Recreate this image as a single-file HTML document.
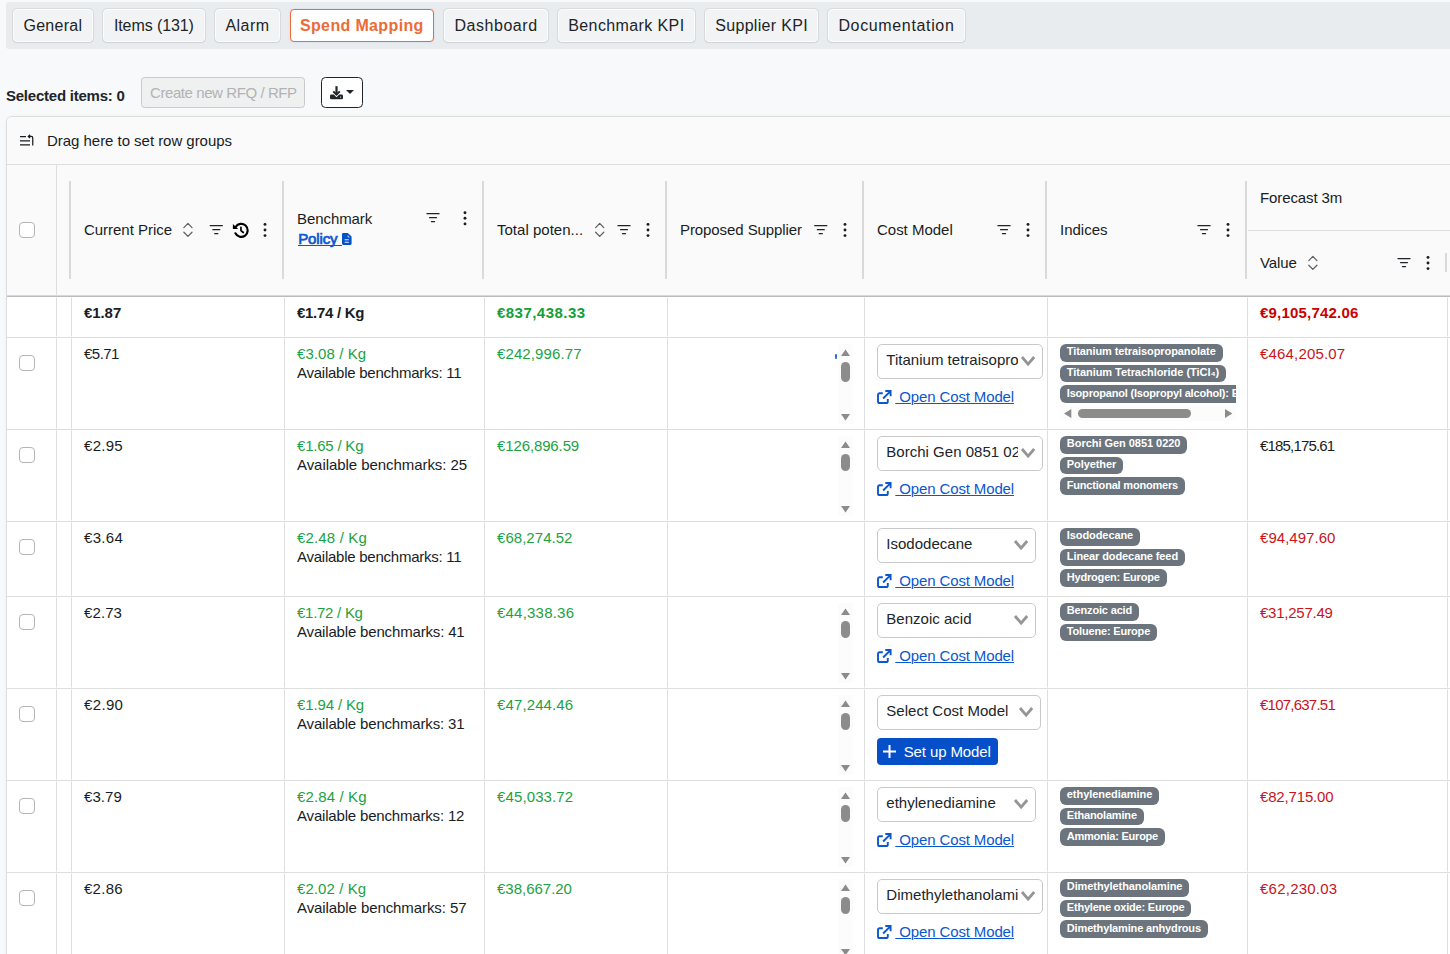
<!DOCTYPE html>
<html lang="en"><head><meta charset="utf-8"><title>Spend Mapping</title>
<style>
*{box-sizing:border-box}
html,body{margin:0;padding:0}
body{width:1450px;height:954px;overflow:hidden;background:#f8f9fa;font-family:"Liberation Sans",sans-serif;color:#181d1f;position:relative;font-size:15px}
.abs,.t{position:absolute}
.t{white-space:nowrap;line-height:20px}
.tabbar{position:absolute;left:6px;top:2px;width:1450px;height:46.5px;background:#e9ecef;border-radius:3px 0 0 3px}
.tab{position:absolute;height:33px;border:1.2px solid #fbfcfd;border-radius:4px;background:#f2f3f5;color:#212529;font-size:16px;line-height:32.400px;text-align:center;white-space:nowrap;box-shadow:0 0 0 1px rgba(33,37,41,.075),0 1px 2px rgba(33,37,41,.06)}
.tab.act{background:#fff;border-color:#ee6a37;color:#ee6a37;font-weight:700;box-shadow:0 0 2px rgba(120,170,220,.35)}
.grid{position:absolute;left:6px;top:116px;width:1460px;height:860px;border:1px solid #dcdddd;border-radius:6px 0 0 0;background:#fff;overflow:hidden;box-shadow:0 0 4px rgba(0,0,0,.035)}
.hbg{position:absolute;left:0;top:0;width:1460px;height:179px;background:#fafafa}
.hl{position:absolute;background:#dddede}
.vh{position:absolute;width:2px;background:#d9dadb}
.row{position:absolute;left:0;width:1460px;border-bottom:1px solid #dddede;background:#fff}
.cell{position:absolute;top:0;height:100%;border:1px solid transparent;border-right-color:#dddede}
.cb{position:absolute;width:16px;height:16px;border:1px solid #b3b5b7;border-radius:4px;background:#fff}
svg{position:absolute;overflow:visible}
.sel{position:absolute;height:35px;border:1px solid #c9c9c9;border-radius:5px;background:#fff;overflow:hidden}
.sel .t{left:8.300px;top:5px;color:#212529}
.badge{position:absolute;height:17.85px;border-radius:6px;background:#6c757d;color:#fff;font-weight:700;font-size:11px;line-height:14.200px;padding:0 6.800px;white-space:nowrap;overflow:hidden}
.lnk{color:#0b57d0;text-decoration:underline;text-underline-offset:0.600px;text-decoration-thickness:1.100px}
.vs{position:absolute;width:14.500px;background:#fcfcfc}
.vs i{position:absolute;left:3px;width:9px;border-radius:4.5px;background:#8c8c8c}
.btn{position:absolute;border-radius:4px}
</style></head><body>

<div class="tabbar">
<div class="tab" style="left:6.80px;width:80.20px;top:7.1px;height:32.95px;letter-spacing:0.281px">General</div>
<div class="tab" style="left:97.00px;width:101.73px;top:7.1px;height:32.95px;letter-spacing:-0.095px">Items (131)</div>
<div class="tab" style="left:208.73px;width:65.45px;top:7.1px;height:32.95px;letter-spacing:0.43px">Alarm</div>
<div class="tab act" style="left:283.95px;width:143.80px;top:6.9px;height:33.2px;letter-spacing:0.355px">Spend Mapping</div>
<div class="tab" style="left:438.14px;width:103.79px;top:7.1px;height:32.95px;letter-spacing:0.544px">Dashboard</div>
<div class="tab" style="left:551.93px;width:136.93px;top:7.1px;height:32.95px;letter-spacing:0.389px">Benchmark KPI</div>
<div class="tab" style="left:698.86px;width:113.45px;top:7.1px;height:32.95px;letter-spacing:0.309px">Supplier KPI</div>
<div class="tab" style="left:822.31px;width:136.26px;top:7.1px;height:32.95px;letter-spacing:0.652px">Documentation</div>
</div>
<div class="t " style="left:6px;top:86.10px;font-size:15px;letter-spacing:-0.237px;font-weight:700;color:#212529;">Selected items: 0</div>
<div class="btn" style="left:141px;top:77px;width:164px;height:30.800px;background:#eff0f0;border:1px solid #c9cacb;border-radius:3.500px"></div>
<div class="t " style="left:150px;top:82.80px;font-size:15px;letter-spacing:-0.419px;color:#b1b3b5;">Create new RFQ / RFP</div>
<div class="btn" style="left:321px;top:76.800px;width:42.100px;height:31px;background:#fff;border:1.25px solid #212529;border-radius:4.500px"></div>
<svg style="left:330.100px;top:85.700px" width="13" height="13.300" viewBox="0 0 13 13.300"><path d="M6.500 0.200v8" fill="none" stroke="#212529" stroke-width="2.200"/><path d="M3.200 5.400 6.500 8.700l3.300-3.300" fill="none" stroke="#212529" stroke-width="2"/><path d="M1.300 8.600h2.500l2.700 2.700 2.700-2.700h2.500a1.300 1.300 0 0 1 1.300 1.300v2.100a1.300 1.300 0 0 1-1.300 1.300H1.300A1.300 1.300 0 0 1 0 12V9.900a1.300 1.300 0 0 1 1.300-1.300z" fill="#212529"/><circle cx="10.600" cy="11.100" r="0.600" fill="#cfe"/></svg>
<svg style="left:345.900px;top:89.900px" width="8" height="4" viewBox="0 0 8 4"><path d="M0 0h8L4 4z" fill="#212529"/></svg>
<div class="grid">
<div class="hbg"></div>
<div class="hl" style="left:0;top:47px;width:1460px;height:1px"></div>
<svg style="left:13px;top:18px" width="14" height="11" viewBox="0 0 14 11"><path d="M0 1.700h6M0 5.800h10M0 9.800h10M12.750 10.400V2.900a1.500 1.500 0 0 0-1.500-1.500H8.600M10.100-0.300 8.300 1.400l1.800 1.700" fill="none" stroke="#181d1f" stroke-width="1.250"/></svg>
<div class="t " style="left:40px;top:13.80px;font-size:15px;letter-spacing:-0.034px;">Drag here to set row groups</div>
<div class="hl" style="left:49px;top:48px;width:1px;height:130px"></div>
<div class="hl" style="left:0;top:178px;width:1460px;height:1px;background:#d8d9da"></div>
<div class="hl" style="left:0;top:179px;width:1460px;height:1px;background:#bbbcbe"></div>
<div class="vh" style="left:62px;top:64px;height:98px"></div>
<div class="vh" style="left:275px;top:64px;height:98px"></div>
<div class="vh" style="left:475px;top:64px;height:98px"></div>
<div class="vh" style="left:658px;top:64px;height:98px"></div>
<div class="vh" style="left:855px;top:64px;height:98px"></div>
<div class="vh" style="left:1038px;top:64px;height:98px"></div>
<div class="vh" style="left:1238px;top:64px;height:98px"></div>
<div class="vh" style="left:1438px;top:136px;height:19px"></div>
<div class="hl" style="left:1241px;top:113px;width:300px;height:1px"></div>
<div class="cb" style="left:12px;top:105px"></div>
<div class="t " style="left:77px;top:103.00px;font-size:15px;letter-spacing:-0.03px;">Current Price</div>
<svg style="left:175px;top:104px" width="11" height="17" viewBox="0 0 11 17"><g transform="translate(0.95 0.9)"><path d="M0.950 5.700 5 1.500l4.050 4.200M0.950 10.300 5 14.500l4.050-4.200" fill="none" stroke="#606365" stroke-width="1.300" stroke-linecap="round" stroke-linejoin="round"/></g></svg>
<svg style="left:202px;top:107px" width="15" height="11" viewBox="0 0 15 11"><g transform="translate(0.3 0.65)"><path d="M0.950 1h12.100M3.550 5h6.900M5.450 9h3.100" fill="none" stroke="#1f2426" stroke-width="1.250" stroke-linecap="round"/></g></svg>
<svg style="left:223.00px;top:103.00px" width="20" height="20" viewBox="0 0 20 20"><path d="M5.700 6.900A6.500 6.500 0 1 1 5.400 13.300" fill="none" stroke="#000" stroke-width="2.150" stroke-linecap="round"/><path d="M2.900 3.900V9.100H8.200z" fill="#000"/><path d="M10.950 7.300V10.500L13.300 12.500" fill="none" stroke="#000" stroke-width="1.700" stroke-linecap="round" stroke-linejoin="round"/></svg>
<svg style="left:256px;top:105px" width="5" height="17" viewBox="0 0 5 17"><g transform="translate(0 0)"><circle cx="2" cy="2.400" r="1.450" fill="#181d1f"/><circle cx="2" cy="8" r="1.450" fill="#181d1f"/><circle cx="2" cy="13.600" r="1.450" fill="#181d1f"/></g></svg>
<div class="t " style="left:290px;top:92.00px;font-size:15px;letter-spacing:-0.078px;">Benchmark</div>
<div class="t " style="left:291.2px;top:111.70px;font-size:15px;letter-spacing:-0.119px;color:#0b57d0;-webkit-text-stroke:0.700px #0b57d0;">Policy</div>
<div class="hl" style="left:291.2px;top:127.7px;width:44.200px;height:1.300px;background:#0b57d0"></div>
<svg style="left:334.9px;top:116.2px" width="9.600" height="11.900" viewBox="0 0 9.600 11.900"><path d="M1.300 0h4.400L9.600 3.500v7.100a1.300 1.300 0 0 1-1.300 1.300H1.300A1.300 1.300 0 0 1 0 10.600V1.300A1.300 1.300 0 0 1 1.300 0z" fill="#0552c8"/><path d="M5.900 2.700 6.100 3.900 7.400 4.100" fill="none" stroke="#e8effa" stroke-width="0.900"/><path d="M2.700 6.800h4.100M2.600 9.300h4.300" stroke="#e3ecf9" stroke-width="1.050"/></svg>
<svg style="left:419px;top:95px" width="15" height="11" viewBox="0 0 15 11"><g transform="translate(0 0.65)"><path d="M0.950 1h12.100M3.550 5h6.900M5.450 9h3.100" fill="none" stroke="#1f2426" stroke-width="1.250" stroke-linecap="round"/></g></svg>
<svg style="left:456px;top:93px" width="5" height="17" viewBox="0 0 5 17"><g transform="translate(0 0.3)"><circle cx="2" cy="2.400" r="1.450" fill="#181d1f"/><circle cx="2" cy="8" r="1.450" fill="#181d1f"/><circle cx="2" cy="13.600" r="1.450" fill="#181d1f"/></g></svg>
<div class="t " style="left:490px;top:103.00px;font-size:15px;letter-spacing:0.016px;">Total poten...</div>
<svg style="left:587px;top:104px" width="11" height="17" viewBox="0 0 11 17"><g transform="translate(0.7 0.9)"><path d="M0.950 5.700 5 1.500l4.050 4.200M0.950 10.300 5 14.500l4.050-4.200" fill="none" stroke="#606365" stroke-width="1.300" stroke-linecap="round" stroke-linejoin="round"/></g></svg>
<svg style="left:610px;top:107px" width="15" height="11" viewBox="0 0 15 11"><g transform="translate(0 0.65)"><path d="M0.950 1h12.100M3.550 5h6.900M5.450 9h3.100" fill="none" stroke="#1f2426" stroke-width="1.250" stroke-linecap="round"/></g></svg>
<svg style="left:639px;top:105px" width="5" height="17" viewBox="0 0 5 17"><g transform="translate(0 0)"><circle cx="2" cy="2.400" r="1.450" fill="#181d1f"/><circle cx="2" cy="8" r="1.450" fill="#181d1f"/><circle cx="2" cy="13.600" r="1.450" fill="#181d1f"/></g></svg>
<div class="t " style="left:673px;top:103.00px;font-size:15px;letter-spacing:-0.082px;">Proposed Supplier</div>
<svg style="left:806px;top:107px" width="15" height="11" viewBox="0 0 15 11"><g transform="translate(0.8 0.65)"><path d="M0.950 1h12.100M3.550 5h6.900M5.450 9h3.100" fill="none" stroke="#1f2426" stroke-width="1.250" stroke-linecap="round"/></g></svg>
<svg style="left:836px;top:105px" width="5" height="17" viewBox="0 0 5 17"><g transform="translate(0 0)"><circle cx="2" cy="2.400" r="1.450" fill="#181d1f"/><circle cx="2" cy="8" r="1.450" fill="#181d1f"/><circle cx="2" cy="13.600" r="1.450" fill="#181d1f"/></g></svg>
<div class="t " style="left:870px;top:103.00px;font-size:15px;letter-spacing:-0.017px;">Cost Model</div>
<svg style="left:990px;top:107px" width="15" height="11" viewBox="0 0 15 11"><g transform="translate(0 0.65)"><path d="M0.950 1h12.100M3.550 5h6.900M5.450 9h3.100" fill="none" stroke="#1f2426" stroke-width="1.250" stroke-linecap="round"/></g></svg>
<svg style="left:1019px;top:105px" width="5" height="17" viewBox="0 0 5 17"><g transform="translate(0 0)"><circle cx="2" cy="2.400" r="1.450" fill="#181d1f"/><circle cx="2" cy="8" r="1.450" fill="#181d1f"/><circle cx="2" cy="13.600" r="1.450" fill="#181d1f"/></g></svg>
<div class="t " style="left:1053px;top:103.00px;font-size:15px;letter-spacing:0.002px;">Indices</div>
<svg style="left:1190px;top:107px" width="15" height="11" viewBox="0 0 15 11"><g transform="translate(0 0.65)"><path d="M0.950 1h12.100M3.550 5h6.900M5.450 9h3.100" fill="none" stroke="#1f2426" stroke-width="1.250" stroke-linecap="round"/></g></svg>
<svg style="left:1219px;top:105px" width="5" height="17" viewBox="0 0 5 17"><g transform="translate(0 0)"><circle cx="2" cy="2.400" r="1.450" fill="#181d1f"/><circle cx="2" cy="8" r="1.450" fill="#181d1f"/><circle cx="2" cy="13.600" r="1.450" fill="#181d1f"/></g></svg>
<div class="t " style="left:1253px;top:71.00px;font-size:15px;letter-spacing:-0.112px;">Forecast 3m</div>
<div class="t " style="left:1253px;top:136.00px;font-size:15px;letter-spacing:-0.125px;">Value</div>
<svg style="left:1300px;top:137px" width="11" height="17" viewBox="0 0 11 17"><g transform="translate(0.85 0.9)"><path d="M0.950 5.700 5 1.500l4.050 4.200M0.950 10.300 5 14.500l4.050-4.200" fill="none" stroke="#606365" stroke-width="1.300" stroke-linecap="round" stroke-linejoin="round"/></g></svg>
<svg style="left:1390px;top:140px" width="15" height="11" viewBox="0 0 15 11"><g transform="translate(0 0.62)"><path d="M0.950 1h12.100M3.550 5h6.900M5.450 9h3.100" fill="none" stroke="#1f2426" stroke-width="1.250" stroke-linecap="round"/></g></svg>
<svg style="left:1419px;top:138px" width="5" height="17" viewBox="0 0 5 17"><g transform="translate(0 0)"><circle cx="2" cy="2.400" r="1.450" fill="#181d1f"/><circle cx="2" cy="8" r="1.450" fill="#181d1f"/><circle cx="2" cy="13.600" r="1.450" fill="#181d1f"/></g></svg>
<div class="row" style="top:180px;height:41px"><div class="cell" style="left:0px;width:50px"></div><div class="cell" style="left:50px;width:15px"></div><div class="cell" style="left:65px;width:213px"></div><div class="cell" style="left:278px;width:200px"></div><div class="cell" style="left:478px;width:183px"></div><div class="cell" style="left:661px;width:197px"></div><div class="cell" style="left:858px;width:183px"></div><div class="cell" style="left:1041px;width:200px"></div><div class="cell" style="left:1241px;width:200px"></div>
<div class="t " style="left:77px;top:5.80px;font-size:15px;letter-spacing:-0.078px;font-weight:700;">€1.87</div>
<div class="t " style="left:290px;top:5.80px;font-size:15px;letter-spacing:-0.287px;font-weight:700;">€1.74 / Kg</div>
<div class="t " style="left:490px;top:5.80px;font-size:15px;letter-spacing:0.467px;font-weight:700;color:#12a136;">€837,438.33</div>
<div class="t " style="left:1253px;top:5.80px;font-size:15px;letter-spacing:0.198px;font-weight:700;color:#cc0000;">€9,105,742.06</div>
</div>
<div class="row" style="top:221px;height:92px"><div class="cell" style="left:0px;width:50px"></div><div class="cell" style="left:50px;width:15px"></div><div class="cell" style="left:65px;width:213px"></div><div class="cell" style="left:278px;width:200px"></div><div class="cell" style="left:478px;width:183px"></div><div class="cell" style="left:661px;width:197px"></div><div class="cell" style="left:858px;width:183px"></div><div class="cell" style="left:1041px;width:200px"></div><div class="cell" style="left:1241px;width:200px"></div>
<div class="cb" style="left:12px;top:17px"></div>
<div class="t " style="left:77px;top:5.80px;font-size:15px;letter-spacing:-0.525px;">€5.71</div>
<div class="t " style="left:290px;top:5.80px;font-size:15px;letter-spacing:0.081px;color:#1ba242;">€3.08 / Kg</div>
<div class="t " style="left:290px;top:24.80px;font-size:15px;letter-spacing:-0.249px;">Available benchmarks: 11</div>
<div class="t " style="left:490px;top:5.80px;font-size:15px;letter-spacing:0.116px;color:#1ba242;">€242,996.77</div>
<div class="vs" style="left:831.3px;top:6px;height:79.600px"><svg style="left:3px;top:5px" width="9" height="7" viewBox="0 0 9 7"><path d="M0 7 4.5 0.600 9 7z" fill="#8c8c8c"/></svg><i style="top:18px;height:19.8px"></i><svg style="left:3px;top:69.800px" width="9" height="7" viewBox="0 0 9 7"><path d="M0 0 4.5 6.4 9 0z" fill="#8c8c8c"/></svg></div>
<div class="abs" style="left:828px;top:16px;width:2px;height:5px;background:#2a6bd6;border-radius:1px"></div>
<div class="sel" style="left:870px;top:6px;width:166px">
<div class="t" style="width:131.9px;overflow:hidden;letter-spacing:0.020px">Titanium tetraisopropanolate</div>
<svg style="left:142.8px;top:10.8px" width="14.200" height="10.100" viewBox="0 0 14.200 10.100"><path d="M1 1 7.100 8.100 13.200 1" fill="none" stroke="#959595" stroke-width="2.800"/></svg>
</div>
<svg style="left:870px;top:52.600px" width="15" height="13" viewBox="0 0 15 13"><path d="M5.8 2.300H2.600A1.600 1.600 0 0 0 1 3.900v6.500A1.600 1.600 0 0 0 2.600 12h6.600a1.600 1.600 0 0 0 1.600-1.600V8" fill="none" stroke="#0b57d0" stroke-width="1.9"/><path d="M8.300 0h5.300v5.300M13.300 0.300 6.100 7.500" fill="none" stroke="#0b57d0" stroke-width="1.900"/></svg>
<div class="t lnk" style="left:888.3px;top:49.10px;font-size:15px;letter-spacing:-0.138px;color:#0b57d0;white-space:pre;"> Open Cost Model</div>
<div class="badge" style="left:1053px;top:6.0px;width:162.5px;letter-spacing:-0.089px;">Titanium tetraisopropanolate</div>
<div class="badge" style="left:1053px;top:26.6px;width:166.1px;letter-spacing:-0.045px;">Titanium Tetrachloride (TiCl₄)</div>
<div class="badge" style="left:1053px;top:47.2px;width:176.0px;letter-spacing:-0.189px;border-radius:6px 0 0 6px;padding-top:1px;">Isopropanol (Isopropyl alcohol): Europe</div>
<div class="abs" style="left:1053px;top:68px;width:176px;height:15px;background:#fcfcfc">
<svg style="left:4.400px;top:3px" width="7.300" height="9" viewBox="0 0 7.300 9"><path d="M7.300 0 0 4.500 7.300 9z" fill="#8c8c8c"/></svg>
<div class="abs" style="left:18px;top:3px;width:113px;height:9px;border-radius:4.500px;background:#8c8c8c"></div>
<svg style="left:164.500px;top:3px" width="7.300" height="9" viewBox="0 0 7.300 9"><path d="M0 0 7.300 4.500 0 9z" fill="#8c8c8c"/></svg>
</div>
<div class="t " style="left:1253px;top:5.80px;font-size:15px;letter-spacing:0.173px;color:#c9141a;">€464,205.07</div>
</div>
<div class="row" style="top:313px;height:92px"><div class="cell" style="left:0px;width:50px"></div><div class="cell" style="left:50px;width:15px"></div><div class="cell" style="left:65px;width:213px"></div><div class="cell" style="left:278px;width:200px"></div><div class="cell" style="left:478px;width:183px"></div><div class="cell" style="left:661px;width:197px"></div><div class="cell" style="left:858px;width:183px"></div><div class="cell" style="left:1041px;width:200px"></div><div class="cell" style="left:1241px;width:200px"></div>
<div class="cb" style="left:12px;top:17px"></div>
<div class="t " style="left:77px;top:5.80px;font-size:15px;letter-spacing:0.291px;">€2.95</div>
<div class="t " style="left:290px;top:5.80px;font-size:15px;letter-spacing:-0.212px;color:#1ba242;">€1.65 / Kg</div>
<div class="t " style="left:290px;top:24.80px;font-size:15px;letter-spacing:-0.059px;">Available benchmarks: 25</div>
<div class="t " style="left:490px;top:5.80px;font-size:15px;letter-spacing:-0.122px;color:#1ba242;">€126,896.59</div>
<div class="vs" style="left:831.3px;top:6px;height:79.600px"><svg style="left:3px;top:5px" width="9" height="7" viewBox="0 0 9 7"><path d="M0 7 4.5 0.600 9 7z" fill="#8c8c8c"/></svg><i style="top:18px;height:17.4px"></i><svg style="left:3px;top:69.800px" width="9" height="7" viewBox="0 0 9 7"><path d="M0 0 4.5 6.4 9 0z" fill="#8c8c8c"/></svg></div>
<div class="sel" style="left:870px;top:6px;width:166px">
<div class="t" style="width:131.9px;overflow:hidden;letter-spacing:0.020px">Borchi Gen 0851 0220</div>
<svg style="left:142.8px;top:10.8px" width="14.200" height="10.100" viewBox="0 0 14.200 10.100"><path d="M1 1 7.100 8.100 13.200 1" fill="none" stroke="#959595" stroke-width="2.800"/></svg>
</div>
<svg style="left:870px;top:52.600px" width="15" height="13" viewBox="0 0 15 13"><path d="M5.8 2.300H2.600A1.600 1.600 0 0 0 1 3.900v6.500A1.600 1.600 0 0 0 2.600 12h6.600a1.600 1.600 0 0 0 1.600-1.600V8" fill="none" stroke="#0b57d0" stroke-width="1.9"/><path d="M8.300 0h5.300v5.300M13.300 0.300 6.100 7.500" fill="none" stroke="#0b57d0" stroke-width="1.900"/></svg>
<div class="t lnk" style="left:888.3px;top:49.10px;font-size:15px;letter-spacing:-0.138px;color:#0b57d0;white-space:pre;"> Open Cost Model</div>
<div class="badge" style="left:1053px;top:6.0px;width:127.3px;letter-spacing:-0.035px;">Borchi Gen 0851 0220</div>
<div class="badge" style="left:1053px;top:26.6px;width:63.1px;letter-spacing:-0.078px;">Polyether</div>
<div class="badge" style="left:1053px;top:47.2px;width:124.8px;letter-spacing:-0.197px;padding-top:1px;">Functional monomers</div>
<div class="t " style="left:1253px;top:5.80px;font-size:15px;letter-spacing:-0.827px;color:#181d1f;">€185,175.61</div>
</div>
<div class="row" style="top:405px;height:75px"><div class="cell" style="left:0px;width:50px"></div><div class="cell" style="left:50px;width:15px"></div><div class="cell" style="left:65px;width:213px"></div><div class="cell" style="left:278px;width:200px"></div><div class="cell" style="left:478px;width:183px"></div><div class="cell" style="left:661px;width:197px"></div><div class="cell" style="left:858px;width:183px"></div><div class="cell" style="left:1041px;width:200px"></div><div class="cell" style="left:1241px;width:200px"></div>
<div class="cb" style="left:12px;top:17px"></div>
<div class="t " style="left:77px;top:5.80px;font-size:15px;letter-spacing:0.306px;">€3.64</div>
<div class="t " style="left:290px;top:5.80px;font-size:15px;letter-spacing:0.158px;color:#1ba242;">€2.48 / Kg</div>
<div class="t " style="left:290px;top:24.80px;font-size:15px;letter-spacing:-0.249px;">Available benchmarks: 11</div>
<div class="t " style="left:490px;top:5.80px;font-size:15px;letter-spacing:0.042px;color:#1ba242;">€68,274.52</div>
<div class="sel" style="left:870px;top:6px;width:159px">
<div class="t" style="width:124.9px;overflow:hidden;letter-spacing:0.020px">Isododecane</div>
<svg style="left:135.8px;top:10.8px" width="14.200" height="10.100" viewBox="0 0 14.200 10.100"><path d="M1 1 7.100 8.100 13.200 1" fill="none" stroke="#959595" stroke-width="2.800"/></svg>
</div>
<svg style="left:870px;top:52.600px" width="15" height="13" viewBox="0 0 15 13"><path d="M5.8 2.300H2.600A1.600 1.600 0 0 0 1 3.900v6.500A1.600 1.600 0 0 0 2.600 12h6.600a1.600 1.600 0 0 0 1.600-1.600V8" fill="none" stroke="#0b57d0" stroke-width="1.9"/><path d="M8.300 0h5.300v5.300M13.300 0.300 6.100 7.500" fill="none" stroke="#0b57d0" stroke-width="1.900"/></svg>
<div class="t lnk" style="left:888.3px;top:49.10px;font-size:15px;letter-spacing:-0.138px;color:#0b57d0;white-space:pre;"> Open Cost Model</div>
<div class="badge" style="left:1053px;top:6.0px;width:80.0px;letter-spacing:-0.08px;">Isododecane</div>
<div class="badge" style="left:1053px;top:26.6px;width:124.9px;letter-spacing:-0.094px;">Linear dodecane feed</div>
<div class="badge" style="left:1053px;top:47.2px;width:106.5px;letter-spacing:-0.194px;padding-top:1px;">Hydrogen: Europe</div>
<div class="t " style="left:1253px;top:5.80px;font-size:15px;letter-spacing:0.036px;color:#c9141a;">€94,497.60</div>
</div>
<div class="row" style="top:480px;height:92px"><div class="cell" style="left:0px;width:50px"></div><div class="cell" style="left:50px;width:15px"></div><div class="cell" style="left:65px;width:213px"></div><div class="cell" style="left:278px;width:200px"></div><div class="cell" style="left:478px;width:183px"></div><div class="cell" style="left:661px;width:197px"></div><div class="cell" style="left:858px;width:183px"></div><div class="cell" style="left:1041px;width:200px"></div><div class="cell" style="left:1241px;width:200px"></div>
<div class="cb" style="left:12px;top:17px"></div>
<div class="t " style="left:77px;top:5.80px;font-size:15px;letter-spacing:0.1px;">€2.73</div>
<div class="t " style="left:290px;top:5.80px;font-size:15px;letter-spacing:-0.27px;color:#1ba242;">€1.72 / Kg</div>
<div class="t " style="left:290px;top:24.80px;font-size:15px;letter-spacing:-0.167px;">Available benchmarks: 41</div>
<div class="t " style="left:490px;top:5.80px;font-size:15px;letter-spacing:0.216px;color:#1ba242;">€44,338.36</div>
<div class="vs" style="left:831.3px;top:6px;height:79.600px"><svg style="left:3px;top:5px" width="9" height="7" viewBox="0 0 9 7"><path d="M0 7 4.5 0.600 9 7z" fill="#8c8c8c"/></svg><i style="top:18px;height:17.4px"></i><svg style="left:3px;top:69.800px" width="9" height="7" viewBox="0 0 9 7"><path d="M0 0 4.5 6.4 9 0z" fill="#8c8c8c"/></svg></div>
<div class="sel" style="left:870px;top:6px;width:159px">
<div class="t" style="width:124.9px;overflow:hidden;letter-spacing:0.020px">Benzoic acid</div>
<svg style="left:135.8px;top:10.8px" width="14.200" height="10.100" viewBox="0 0 14.200 10.100"><path d="M1 1 7.100 8.100 13.200 1" fill="none" stroke="#959595" stroke-width="2.800"/></svg>
</div>
<svg style="left:870px;top:52.600px" width="15" height="13" viewBox="0 0 15 13"><path d="M5.8 2.300H2.600A1.600 1.600 0 0 0 1 3.900v6.500A1.600 1.600 0 0 0 2.600 12h6.600a1.600 1.600 0 0 0 1.600-1.600V8" fill="none" stroke="#0b57d0" stroke-width="1.9"/><path d="M8.300 0h5.300v5.300M13.300 0.300 6.100 7.500" fill="none" stroke="#0b57d0" stroke-width="1.900"/></svg>
<div class="t lnk" style="left:888.3px;top:49.10px;font-size:15px;letter-spacing:-0.138px;color:#0b57d0;white-space:pre;"> Open Cost Model</div>
<div class="badge" style="left:1053px;top:6.0px;width:78.9px;letter-spacing:-0.168px;">Benzoic acid</div>
<div class="badge" style="left:1053px;top:26.6px;width:97.0px;letter-spacing:-0.177px;">Toluene: Europe</div>
<div class="t " style="left:1253px;top:5.80px;font-size:15px;letter-spacing:-0.239px;color:#c9141a;">€31,257.49</div>
</div>
<div class="row" style="top:572px;height:92px"><div class="cell" style="left:0px;width:50px"></div><div class="cell" style="left:50px;width:15px"></div><div class="cell" style="left:65px;width:213px"></div><div class="cell" style="left:278px;width:200px"></div><div class="cell" style="left:478px;width:183px"></div><div class="cell" style="left:661px;width:197px"></div><div class="cell" style="left:858px;width:183px"></div><div class="cell" style="left:1041px;width:200px"></div><div class="cell" style="left:1241px;width:200px"></div>
<div class="cb" style="left:12px;top:17px"></div>
<div class="t " style="left:77px;top:5.80px;font-size:15px;letter-spacing:0.356px;">€2.90</div>
<div class="t " style="left:290px;top:5.80px;font-size:15px;letter-spacing:-0.134px;color:#1ba242;">€1.94 / Kg</div>
<div class="t " style="left:290px;top:24.80px;font-size:15px;letter-spacing:-0.173px;">Available benchmarks: 31</div>
<div class="t " style="left:490px;top:5.80px;font-size:15px;letter-spacing:0.12px;color:#1ba242;">€47,244.46</div>
<div class="vs" style="left:831.3px;top:6px;height:79.600px"><svg style="left:3px;top:5px" width="9" height="7" viewBox="0 0 9 7"><path d="M0 7 4.5 0.600 9 7z" fill="#8c8c8c"/></svg><i style="top:18px;height:17.4px"></i><svg style="left:3px;top:69.800px" width="9" height="7" viewBox="0 0 9 7"><path d="M0 0 4.5 6.4 9 0z" fill="#8c8c8c"/></svg></div>
<div class="sel" style="left:870px;top:6px;width:164px">
<div class="t" style="width:129.9px;overflow:hidden;letter-spacing:0.020px">Select Cost Model</div>
<svg style="left:140.8px;top:10.8px" width="14.200" height="10.100" viewBox="0 0 14.200 10.100"><path d="M1 1 7.100 8.100 13.200 1" fill="none" stroke="#959595" stroke-width="2.800"/></svg>
</div>
<div class="btn" style="left:870px;top:49.200px;width:121px;height:26.600px;background:#0550c9"></div>
<svg style="left:876.4px;top:55.800px" width="13" height="13" viewBox="0 0 13 13"><path d="M6.500 0v13M0 6.500h13" stroke="#fff" stroke-width="2" fill="none"/></svg>
<div class="t " style="left:896.7px;top:52.60px;font-size:15px;letter-spacing:-0.108px;color:#fff;">Set up Model</div>
<div class="t " style="left:1253px;top:5.80px;font-size:15px;letter-spacing:-0.767px;color:#c9141a;">€107,637.51</div>
</div>
<div class="row" style="top:664px;height:92px"><div class="cell" style="left:0px;width:50px"></div><div class="cell" style="left:50px;width:15px"></div><div class="cell" style="left:65px;width:213px"></div><div class="cell" style="left:278px;width:200px"></div><div class="cell" style="left:478px;width:183px"></div><div class="cell" style="left:661px;width:197px"></div><div class="cell" style="left:858px;width:183px"></div><div class="cell" style="left:1041px;width:200px"></div><div class="cell" style="left:1241px;width:200px"></div>
<div class="cb" style="left:12px;top:17px"></div>
<div class="t " style="left:77px;top:5.80px;font-size:15px;letter-spacing:0.084px;">€3.79</div>
<div class="t " style="left:290px;top:5.80px;font-size:15px;letter-spacing:0.127px;color:#1ba242;">€2.84 / Kg</div>
<div class="t " style="left:290px;top:24.80px;font-size:15px;letter-spacing:-0.177px;">Available benchmarks: 12</div>
<div class="t " style="left:490px;top:5.80px;font-size:15px;letter-spacing:0.122px;color:#1ba242;">€45,033.72</div>
<div class="vs" style="left:831.3px;top:6px;height:79.600px"><svg style="left:3px;top:5px" width="9" height="7" viewBox="0 0 9 7"><path d="M0 7 4.5 0.600 9 7z" fill="#8c8c8c"/></svg><i style="top:18px;height:17.4px"></i><svg style="left:3px;top:69.800px" width="9" height="7" viewBox="0 0 9 7"><path d="M0 0 4.5 6.4 9 0z" fill="#8c8c8c"/></svg></div>
<div class="sel" style="left:870px;top:6px;width:159px">
<div class="t" style="width:124.9px;overflow:hidden;letter-spacing:0.020px">ethylenediamine</div>
<svg style="left:135.8px;top:10.8px" width="14.200" height="10.100" viewBox="0 0 14.200 10.100"><path d="M1 1 7.100 8.100 13.200 1" fill="none" stroke="#959595" stroke-width="2.800"/></svg>
</div>
<svg style="left:870px;top:52.600px" width="15" height="13" viewBox="0 0 15 13"><path d="M5.8 2.300H2.600A1.600 1.600 0 0 0 1 3.900v6.500A1.600 1.600 0 0 0 2.600 12h6.600a1.600 1.600 0 0 0 1.600-1.600V8" fill="none" stroke="#0b57d0" stroke-width="1.9"/><path d="M8.300 0h5.300v5.300M13.300 0.300 6.100 7.500" fill="none" stroke="#0b57d0" stroke-width="1.900"/></svg>
<div class="t lnk" style="left:888.3px;top:49.10px;font-size:15px;letter-spacing:-0.138px;color:#0b57d0;white-space:pre;"> Open Cost Model</div>
<div class="badge" style="left:1053px;top:6.0px;width:99.2px;letter-spacing:-0.046px;">ethylenediamine</div>
<div class="badge" style="left:1053px;top:26.6px;width:83.7px;letter-spacing:-0.174px;">Ethanolamine</div>
<div class="badge" style="left:1053px;top:47.2px;width:104.8px;letter-spacing:-0.237px;padding-top:1px;">Ammonia: Europe</div>
<div class="t " style="left:1253px;top:5.80px;font-size:15px;letter-spacing:-0.161px;color:#c9141a;">€82,715.00</div>
</div>
<div class="row" style="top:756px;height:92px"><div class="cell" style="left:0px;width:50px"></div><div class="cell" style="left:50px;width:15px"></div><div class="cell" style="left:65px;width:213px"></div><div class="cell" style="left:278px;width:200px"></div><div class="cell" style="left:478px;width:183px"></div><div class="cell" style="left:661px;width:197px"></div><div class="cell" style="left:858px;width:183px"></div><div class="cell" style="left:1041px;width:200px"></div><div class="cell" style="left:1241px;width:200px"></div>
<div class="cb" style="left:12px;top:17px"></div>
<div class="t " style="left:77px;top:5.80px;font-size:15px;letter-spacing:0.278px;">€2.86</div>
<div class="t " style="left:290px;top:5.80px;font-size:15px;letter-spacing:0.089px;color:#1ba242;">€2.02 / Kg</div>
<div class="t " style="left:290px;top:24.80px;font-size:15px;letter-spacing:-0.085px;">Available benchmarks: 57</div>
<div class="t " style="left:490px;top:5.80px;font-size:15px;letter-spacing:-0.013px;color:#1ba242;">€38,667.20</div>
<div class="vs" style="left:831.3px;top:6px;height:79.600px"><svg style="left:3px;top:5px" width="9" height="7" viewBox="0 0 9 7"><path d="M0 7 4.5 0.600 9 7z" fill="#8c8c8c"/></svg><i style="top:18px;height:17.4px"></i><svg style="left:3px;top:69.800px" width="9" height="7" viewBox="0 0 9 7"><path d="M0 0 4.5 6.4 9 0z" fill="#8c8c8c"/></svg></div>
<div class="sel" style="left:870px;top:6px;width:166px">
<div class="t" style="width:131.9px;overflow:hidden;letter-spacing:0.020px">Dimethylethanolamine</div>
<svg style="left:142.8px;top:10.8px" width="14.200" height="10.100" viewBox="0 0 14.200 10.100"><path d="M1 1 7.100 8.100 13.200 1" fill="none" stroke="#959595" stroke-width="2.800"/></svg>
</div>
<svg style="left:870px;top:52.600px" width="15" height="13" viewBox="0 0 15 13"><path d="M5.8 2.300H2.600A1.600 1.600 0 0 0 1 3.900v6.500A1.600 1.600 0 0 0 2.600 12h6.600a1.600 1.600 0 0 0 1.600-1.600V8" fill="none" stroke="#0b57d0" stroke-width="1.9"/><path d="M8.300 0h5.300v5.300M13.300 0.300 6.100 7.500" fill="none" stroke="#0b57d0" stroke-width="1.900"/></svg>
<div class="t lnk" style="left:888.3px;top:49.10px;font-size:15px;letter-spacing:-0.138px;color:#0b57d0;white-space:pre;"> Open Cost Model</div>
<div class="badge" style="left:1053px;top:6.0px;width:129.2px;letter-spacing:-0.088px;">Dimethylethanolamine</div>
<div class="badge" style="left:1053px;top:26.6px;width:131.3px;letter-spacing:-0.21px;">Ethylene oxide: Europe</div>
<div class="badge" style="left:1053px;top:47.2px;width:147.8px;letter-spacing:-0.149px;padding-top:1px;">Dimethylamine anhydrous</div>
<div class="t " style="left:1253px;top:5.80px;font-size:15px;letter-spacing:0.233px;color:#c9141a;">€62,230.03</div>
</div>
</div>
</body></html>
